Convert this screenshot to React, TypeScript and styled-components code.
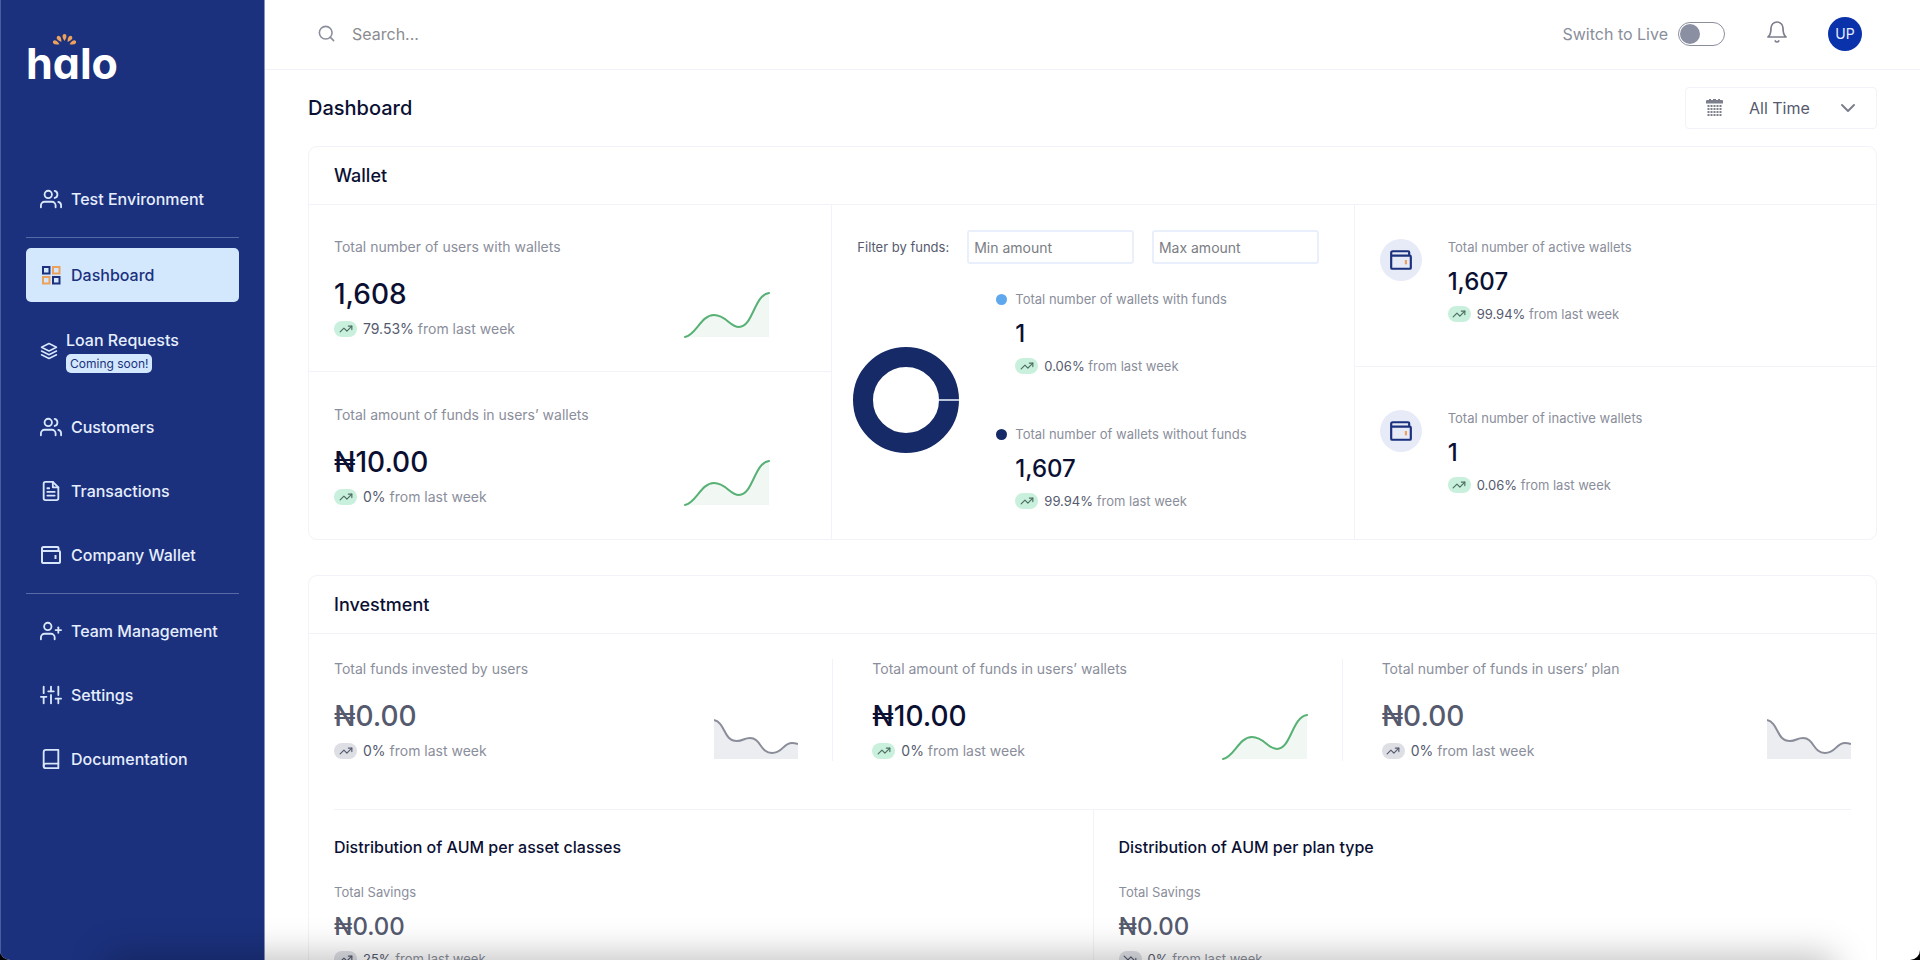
import React from "react";
import styled, { createGlobalStyle, css } from "styled-components";
import { FiBell, FiBook, FiChevronDown, FiFileText, FiLayers, FiSearch, FiSliders, FiUserPlus, FiUsers } from "react-icons/fi";
import { TrendingDown, TrendingUp } from "lucide-react";

const color = {
  navy: "#1b317d",
  ink: "#0b1033",
  slate: "#555a6e",
  grey: "#8a8e9b",
  line: "#f2f3fa",
  sky: "#d3e8fd",
  orange: "#eda15c",
};

const GlobalStyle = createGlobalStyle`
  * { box-sizing: border-box; }
  body { margin: 0; background: #000; }
  body, input, select, button { font-family: Inter, "Liberation Sans", sans-serif; }
  h1, h2, h3, p, ul { margin: 0; padding: 0; font-weight: 400; }
  ul { list-style: none; }
`;

const Shell = styled.div`
  display: flex;
  height: 100vh;
  overflow: hidden;
  background: #fff;
  border-radius: 0 0 10px 10px;
`;

/* Sidebar */

const Sidebar = styled.aside`
  flex: none;
  width: 265px;
  padding: 28px 25px 0;
  background: ${color.navy};
  border-left: 1px solid #47609f;
  border-right: 1px solid #8792bd;
`;

const Logo = styled.a`
  display: block;
  position: relative;
  height: 144px;
  color: #fff;
  font-size: 43px;
  font-weight: 700;
  line-height: 70px;
  text-decoration: none;
  font-feature-settings: "cv11";
`;

const Rays = styled.svg`
  position: absolute;
  left: 25px;
  top: 5px;
`;

const NavList = styled.ul`
  display: flex;
  flex-direction: column;
  gap: 10px;
`;

const Separator = styled.li`
  height: 2px;
  border-bottom: 1px solid #566aa6;
`;

const NavLink = styled.a<{ $active?: boolean; $tall?: boolean }>`
  display: flex;
  align-items: center;
  gap: ${(p) => (p.$tall ? 8 : 9)}px;
  height: ${(p) => (p.$tall ? 78 : 54)}px;
  padding-left: 14px;
  border-radius: 5px;
  font-size: 16px;
  font-weight: 500;
  line-height: 22px;
  white-space: nowrap;
  text-decoration: none;
  color: ${(p) => (p.$active ? color.navy : "#e6eefd")};
  background: ${(p) => (p.$active ? color.sky : "transparent")};
  svg { flex: none; color: #d9e7fc; }
`;

const Soon = styled.span`
  display: block;
  width: max-content;
  margin-top: 3px;
  padding: 0 4px;
  border-radius: 5px;
  background: ${color.sky};
  color: ${color.navy};
  font-size: 12px;
  font-weight: 400;
  line-height: 19px;
`;

/* Top bar */

const Main = styled.div`
  flex: 1;
  min-width: 0;
  display: flex;
  flex-direction: column;
`;

const TopBar = styled.header`
  flex: none;
  display: flex;
  align-items: center;
  height: 70px;
  padding: 0 58px 2px 52px;
  border-bottom: 1px solid ${color.line};
  color: ${color.grey};
`;

const Search = styled.label`
  flex: 1;
  display: flex;
  align-items: center;
  gap: 16px;
`;

const SearchInput = styled.input`
  flex: 1;
  border: 0;
  outline: 0;
  padding: 0;
  font-size: 16px;
  background: none;
  &::placeholder { color: #8b8c90; opacity: 1; }
`;

const SwitchLabel = styled.label`
  display: flex;
  align-items: center;
  gap: 10px;
  font-size: 16px;
`;

const Switch = styled.input`
  appearance: none;
  width: 47px;
  height: 24px;
  margin: 0;
  padding: 1px;
  border: 1px solid ${color.grey};
  border-radius: 12px;
  &::before {
    content: "";
    display: block;
    width: 20px;
    height: 20px;
    border-radius: 50%;
    background: #8b8fa2;
  }
  &:checked::before { margin-left: 23px; }
`;

const IconButton = styled.button`
  display: flex;
  margin: 0 39px 4px 40px;
  padding: 0;
  border: 0;
  background: none;
  color: #7d808c;
`;

const Avatar = styled.button`
  width: 34px;
  height: 34px;
  padding: 0;
  border: 0;
  border-radius: 50%;
  background: #0a32ab;
  color: #e8eeff;
  font-size: 14px;
`;

/* Page */

const Page = styled.main`
  flex: 1;
  overflow-y: auto;
  scrollbar-width: none;
  padding: 17px 43px 44px;
`;

const TitleRow = styled.div`
  display: flex;
  align-items: center;
  justify-content: space-between;
  margin-bottom: 17px;
`;

const PageTitle = styled.h1`
  font-size: 20px;
  font-weight: 500;
  color: ${color.ink};
`;

const Period = styled.div`
  position: relative;
  width: 192px;
`;

const PeriodSelect = styled.select`
  appearance: none;
  display: block;
  width: 100%;
  height: 42px;
  padding: 0 20px 0 63px;
  border: 1px solid ${color.line};
  border-radius: 4px;
  background: #fff;
  color: ${color.slate};
  font-size: 16px;
`;

const PeriodIcons = styled.div`
  position: absolute;
  inset: 0;
  display: flex;
  align-items: center;
  justify-content: space-between;
  padding: 0 17px 0 21px;
  color: #7d808c;
  pointer-events: none;
`;

const Card = styled.section`
  border: 1px solid ${color.line};
  border-radius: 9px;
  & + & { margin-top: 35px; }
`;

const CardTitle = styled.h2`
  padding: 17px 25px 16px;
  border-bottom: 1px solid ${color.line};
  font-size: 18px;
  font-weight: 500;
  line-height: 24px;
  color: ${color.ink};
`;

const Thirds = styled.div`
  display: grid;
  grid-template-columns: repeat(3, minmax(0, 1fr));
`;

const Column = styled.div`
  display: flex;
  flex-direction: column;
  & + & { border-left: 1px solid ${color.line}; }
`;

const ChartCell = styled.div`
  display: flex;
  justify-content: space-between;
  align-items: flex-end;
  padding: 32px 61px 32px 25px;
  & + & { padding-top: 33px; border-top: 1px solid ${color.line}; }
`;

const IconCell = styled.div`
  display: flex;
  gap: 26px;
  padding: 32px 25px 43px;
  & + & {
    flex: 1;
    padding: 41px 25px;
    border-top: 1px solid ${color.line};
  }
`;

const IconDisc = styled.span`
  flex: none;
  display: flex;
  align-items: center;
  justify-content: center;
  width: 42px;
  height: 42px;
  margin-top: 2px;
  border-radius: 50%;
  background: #e7ebf8;
  color: ${color.navy};
`;

const Label = styled.h3<{ $large?: boolean }>`
  font-size: ${(p) => (p.$large ? 14 : 13)}px;
  line-height: 20px;
  color: ${color.grey};
`;

const Value = styled.p<{ $large?: boolean; $muted?: boolean }>`
  color: ${(p) => (p.$muted ? color.slate : color.ink)};
  font-weight: 500;
  ${(p) =>
    p.$large
      ? css`margin-top: 19px; font-size: 28px; line-height: 36px;`
      : css`margin-top: 9px; font-size: 24px; line-height: 32px;`}
`;

const Trend = styled.p<{ $large?: boolean }>`
  display: flex;
  align-items: center;
  gap: 6px;
  margin-top: 7px;
  font-size: ${(p) => (p.$large ? 14 : 13)}px;
  line-height: ${(p) => (p.$large ? 20 : 18)}px;
  color: ${color.grey};
  b { font-weight: 400; color: ${color.slate}; }
`;

const Pill = styled.span<{ $muted?: boolean }>`
  display: flex;
  align-items: center;
  justify-content: center;
  width: 23px;
  height: 16px;
  border-radius: 8px;
  background: ${(p) => (p.$muted ? "#dddfe5" : "#c9f0dc")};
  color: ${(p) => (p.$muted ? color.slate : "#4c6d62")};
`;

/* Funds filter */

const Filter = styled.form`
  display: flex;
  align-items: center;
  gap: 18px;
  padding: 25px 35px 0 25px;
  font-size: 13px;
  color: ${color.slate};
  label { white-space: nowrap; }
`;

const AmountInput = styled.input`
  flex: 1;
  min-width: 0;
  height: 34px;
  padding: 0 5px;
  border: 2px solid #eaf0fb;
  border-radius: 3px;
  font-size: 14px;
  &::placeholder { color: #7b7d84; opacity: 1; }
`;

const Split = styled.div`
  flex: 1;
  display: flex;
  align-items: center;
  gap: 37px;
  padding: 0 0 4px 21px;
`;

const Legend = styled.ul`
  display: grid;
  gap: 49px;
`;

const LegendItem = styled.li`
  display: flex;
  gap: 8px;
`;

const Dot = styled.span<{ $fill: string }>`
  width: 11px;
  height: 11px;
  margin-top: 5px;
  border-radius: 50%;
  background: ${(p) => p.$fill};
`;

/* Investment */

const Summary = styled.div`
  display: grid;
  grid-template-columns: 498fr 509fr 509fr;
  margin: 0 25px;
  padding: 25px 0 48px;
  border-bottom: 1px solid ${color.line};
`;

const SummaryCell = styled.div`
  display: flex;
  justify-content: space-between;
  align-items: flex-end;
  padding-right: 34px;
  & + & { padding-left: 39px; border-left: 1px solid ${color.line}; }
  &:last-child { padding-right: 0; }
`;

const Halves = styled.div`
  display: grid;
  grid-template-columns: 1fr 1fr;
`;

const Distribution = styled.div`
  padding: 25px 25px 60px;
  & + & { border-left: 1px solid ${color.line}; }
`;

const DistributionTitle = styled.h3`
  margin-bottom: 23px;
  font-size: 16px;
  font-weight: 500;
  line-height: 24px;
  color: ${color.ink};
`;

const DockShadow = styled.div`
  position: fixed;
  left: 110px;
  right: 90px;
  top: 100%;
  height: 40px;
  box-shadow: 0 0 36px 4px rgba(0, 0, 0, 0.26);
  pointer-events: none;
`;

/* Drawings */

const WalletIcon = ({ size, accent = "currentColor" }: { size: number; accent?: string }) => (
  <svg width={size} height={size} viewBox="0 0 22 22" fill="none" stroke="currentColor" strokeWidth="2" strokeLinejoin="round">
    <path d="M2 7V4.5Q2 3 3.5 3H17.500Q18.500 3 18.500 4V7M2 7H19Q20 7 20 8V18Q20 19 19 19H3Q2 19 2 18Z" />
    <path d="M15.500 11v4" stroke={accent} />
  </svg>
);

const GridIcon = () => (
  <svg width="22" height="22" viewBox="0 0 22 22" fill="none" strokeWidth="2">
    <rect x="3" y="3" width="6.500" height="6.500" stroke={color.navy} />
    <rect x="13" y="3" width="6.500" height="6.500" stroke={color.orange} />
    <rect x="3" y="13" width="6.500" height="6.500" stroke={color.orange} />
    <rect x="13" y="13" width="6.500" height="6.500" stroke={color.navy} />
  </svg>
);

const CalendarIcon = () => (
  <svg width="17" height="18" viewBox="0 0 17 18" fill="currentColor">
    <path d="M0 2q0-1 1-1h2V0h2v1h2V0h3v1h2V0h2v1h2q1 0 1 1v2.500H0z" />
    {[6, 9, 12, 15].map((y) =>
      [1, 4, 7, 10, 13].map((x) => <rect key={`${x}-${y}`} x={x + 0.5} y={y} width="2" height="2" />)
    )}
  </svg>
);

const LogoRays = () => (
  <Rays width="27" height="14" viewBox="0 0 27 14" fill={color.orange}>
    {[-66, -34, 0, 34, 66].map((angle) => (
      <path key={angle} d="M13.500 8Q10.700 4 11.900 1.800Q13.500 0 15.100 1.800Q16.300 4 13.500 8Z" transform={`rotate(${angle} 13.500 13.500)`} />
    ))}
  </Rays>
);

const RisingChart = () => (
  <svg width="86" height="47" viewBox="0 0 86 47" fill="none" role="img" aria-label="Rising">
    <path d="M1 45C12 43 17 23 30 23C42 23 46 35 55 35C69 35 70 3 85 1V45Z" fill="#f1f7f3" />
    <path d="M1 45C12 43 17 23 30 23C42 23 46 35 55 35C69 35 70 3 85 1" stroke="#57b174" strokeWidth="2" strokeLinecap="round" />
  </svg>
);

const FlatChart = () => (
  <svg width="84" height="43" viewBox="0 0 84 43" fill="none" role="img" aria-label="Falling">
    <path d="M0 2C12 5 9 23 23 23C29 23 30 20 36 20C47 20 46 35 58 35C69 35 69 25 78 25Q81 25 84 26V41H0Z" fill="#ecedf0" />
    <path d="M0 2C12 5 9 23 23 23C29 23 30 20 36 20C47 20 46 35 58 35C69 35 69 25 78 25Q81 25 84 26" stroke="#8a8d99" strokeWidth="2" />
  </svg>
);

const Donut = () => (
  <svg width="106" height="106" viewBox="0 0 106 106" role="img" aria-label="Wallets without funds, 99.94%">
    <circle cx="53" cy="53" r="43" fill="none" stroke="#152a66" strokeWidth="20" />
    <rect x="86" y="52" width="20" height="2" fill="#b9c3da" />
  </svg>
);

interface StatProps {
  label: string;
  value: string;
  change: string;
  large?: boolean;
  muted?: boolean;
  down?: boolean;
}

const Stat = ({ label, value, change, large, muted, down }: StatProps) => (
  <div>
    <Label $large={large}>{label}</Label>
    <Value $large={large} $muted={muted}>{value}</Value>
    <Trend $large={large}>
      <Pill $muted={muted}>{down ? <TrendingDown size={14} /> : <TrendingUp size={14} />}</Pill>
      <span><b>{change}</b> from last week</span>
    </Trend>
  </div>
);

export default function App() {
  return (
    <>
      <GlobalStyle />
      <Shell>
        <Sidebar>
          <Logo href="#">halo<LogoRays /></Logo>
          <nav>
            <NavList>
              <li><NavLink href="#"><FiUsers size={22} />Test Environment</NavLink></li>
              <Separator />
              <li><NavLink href="#" $active aria-current="page"><GridIcon />Dashboard</NavLink></li>
              <li>
                <NavLink href="#" $tall>
                  <FiLayers size={18} />
                  <span>Loan Requests<Soon>Coming soon!</Soon></span>
                </NavLink>
              </li>
              <li><NavLink href="#"><FiUsers size={22} />Customers</NavLink></li>
              <li><NavLink href="#"><FiFileText size={22} />Transactions</NavLink></li>
              <li><NavLink href="#"><WalletIcon size={22} />Company Wallet</NavLink></li>
              <Separator />
              <li><NavLink href="#"><FiUserPlus size={22} />Team Management</NavLink></li>
              <li><NavLink href="#"><FiSliders size={22} />Settings</NavLink></li>
              <li><NavLink href="#"><FiBook size={22} />Documentation</NavLink></li>
            </NavList>
          </nav>
        </Sidebar>

        <Main>
          <TopBar>
            <Search>
              <FiSearch size={19} />
              <SearchInput type="text" placeholder="Search..." aria-label="Search" />
            </Search>
            <SwitchLabel>Switch to Live<Switch type="checkbox" role="switch" /></SwitchLabel>
            <IconButton type="button" aria-label="Notifications"><FiBell size={24} strokeWidth={1.7} /></IconButton>
            <Avatar type="button">UP</Avatar>
          </TopBar>

          <Page>
            <TitleRow>
              <PageTitle>Dashboard</PageTitle>
              <Period>
                <PeriodSelect aria-label="Period"><option>All Time</option></PeriodSelect>
                <PeriodIcons><CalendarIcon /><FiChevronDown size={24} /></PeriodIcons>
              </Period>
            </TitleRow>

            <Card>
              <CardTitle>Wallet</CardTitle>
              <Thirds>
                <Column>
                  <ChartCell>
                    <Stat large label="Total number of users with wallets" value="1,608" change="79.53%" />
                    <RisingChart />
                  </ChartCell>
                  <ChartCell>
                    <Stat large label="Total amount of funds in users’ wallets" value="₦10.00" change="0%" />
                    <RisingChart />
                  </ChartCell>
                </Column>
                <Column>
                  <Filter>
                    <label htmlFor="min-amount">Filter by funds:</label>
                    <AmountInput id="min-amount" placeholder="Min amount" />
                    <AmountInput placeholder="Max amount" aria-label="Max amount" />
                  </Filter>
                  <Split>
                    <Donut />
                    <Legend>
                      <LegendItem>
                        <Dot $fill="#5fa8ee" />
                        <Stat label="Total number of wallets with funds" value="1" change="0.06%" />
                      </LegendItem>
                      <LegendItem>
                        <Dot $fill="#152a66" />
                        <Stat label="Total number of wallets without funds" value="1,607" change="99.94%" />
                      </LegendItem>
                    </Legend>
                  </Split>
                </Column>
                <Column>
                  <IconCell>
                    <IconDisc><WalletIcon size={24} accent={color.orange} /></IconDisc>
                    <Stat label="Total number of active wallets" value="1,607" change="99.94%" />
                  </IconCell>
                  <IconCell>
                    <IconDisc><WalletIcon size={24} accent={color.orange} /></IconDisc>
                    <Stat label="Total number of inactive wallets" value="1" change="0.06%" />
                  </IconCell>
                </Column>
              </Thirds>
            </Card>

            <Card>
              <CardTitle>Investment</CardTitle>
              <Summary>
                <SummaryCell>
                  <Stat large muted label="Total funds invested by users" value="₦0.00" change="0%" />
                  <FlatChart />
                </SummaryCell>
                <SummaryCell>
                  <Stat large label="Total amount of funds in users’ wallets" value="₦10.00" change="0%" />
                  <RisingChart />
                </SummaryCell>
                <SummaryCell>
                  <Stat large muted label="Total number of funds in users’ plan" value="₦0.00" change="0%" />
                  <FlatChart />
                </SummaryCell>
              </Summary>
              <Halves>
                <Distribution>
                  <DistributionTitle>Distribution of AUM per asset classes</DistributionTitle>
                  <Stat muted label="Total Savings" value="₦0.00" change="25%" />
                </Distribution>
                <Distribution>
                  <DistributionTitle>Distribution of AUM per plan type</DistributionTitle>
                  <Stat muted down label="Total Savings" value="₦0.00" change="0%" />
                </Distribution>
              </Halves>
            </Card>
          </Page>
        </Main>
      </Shell>
      <DockShadow />
    </>
  );
}
